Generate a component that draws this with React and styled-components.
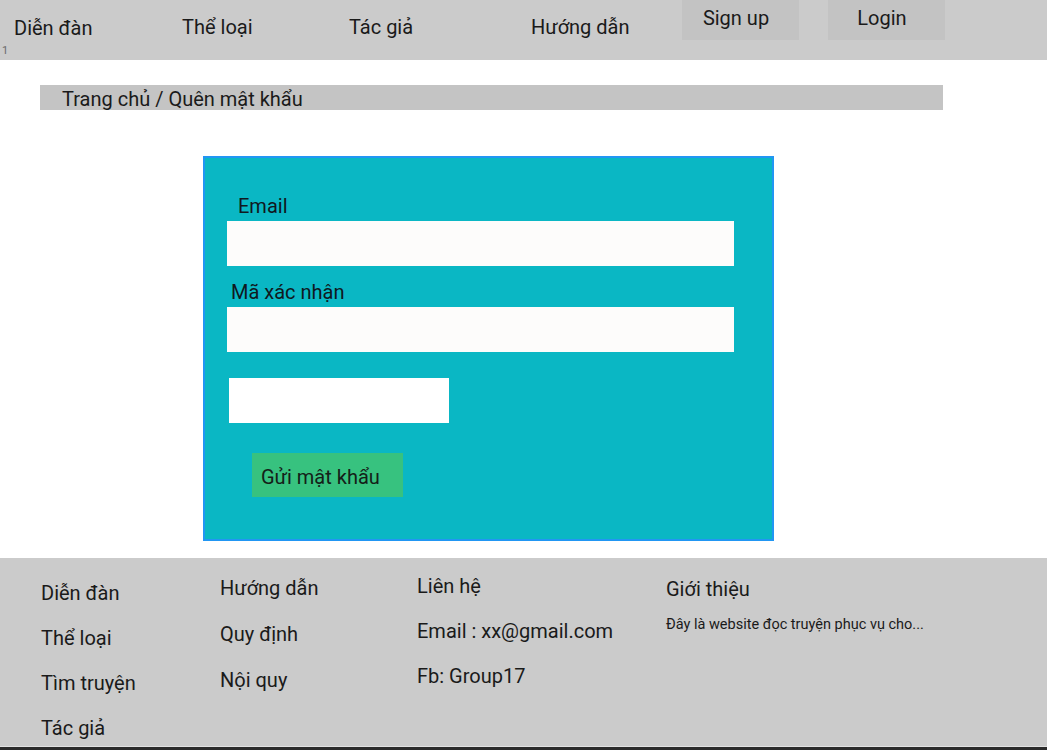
import styled, { createGlobalStyle } from "styled-components";

const GlobalStyle = createGlobalStyle`
  body {
    margin: 0;
    font-family: Roboto, "Noto Sans", sans-serif;
    color: #161616;
    background: #ffffff;
  }
`;

const navLinks = [
  { label: "Diễn đàn", width: 168, top: 17 },
  { label: "Thể loại", width: 167, top: 16 },
  { label: "Tác giả", width: 182, top: 16 },
  { label: "Hướng dẫn", width: 151, top: 16 },
];

const footerColumns = [
  { left: 41, width: 179, top: 582, gap: 23, items: ["Diễn đàn", "Thể loại", "Tìm truyện", "Tác giả"] },
  { left: 0, width: 197, top: 577, gap: 24, items: ["Hướng dẫn", "Quy định", "Nội quy"] },
  { left: 0, width: 249, top: 575, gap: 23, items: ["Liên hệ", "Email : xx@gmail.com", "Fb: Group17"] },
];

export default function App() {
  return (
    <>
      <GlobalStyle />
      <Page>
        <Header>
          <PageNumber>1</PageNumber>
          {navLinks.map((link) => (
            <NavLink key={link.label} $width={link.width} $top={link.top}>
              {link.label}
            </NavLink>
          ))}
          <HeaderButton>Sign up</HeaderButton>
          <HeaderButton $gap={29}>Login</HeaderButton>
        </Header>

        <Breadcrumb>Trang chủ / Quên mật khẩu</Breadcrumb>

        <FormCard>
          <Label $indent={11}>Email</Label>
          <Input type="text" />
          <Label $indent={4} $space={15}>
            Mã xác nhận
          </Label>
          <Input type="text" />
          <CaptchaInput type="text" />
          <SubmitButton type="button">Gửi mật khẩu</SubmitButton>
        </FormCard>

        <Footer>
          {footerColumns.map((col, i) => (
            <FooterColumn key={i} $left={col.left} $width={col.width} $top={col.top - 558} $gap={col.gap}>
              {col.items.map((item) => (
                <FooterLink key={item}>{item}</FooterLink>
              ))}
            </FooterColumn>
          ))}
          <FooterColumn $left={0} $width={330} $top={578 - 558} $gap={18}>
            <FooterLink>Giới thiệu</FooterLink>
            <AboutText>Đây là website đọc truyện phục vụ cho...</AboutText>
          </FooterColumn>
        </Footer>
        <Taskbar />
      </Page>
    </>
  );
}

const Page = styled.div`
  width: 1047px;
  height: 750px;
  overflow: hidden;
  display: flex;
  flex-direction: column;
`;

const Header = styled.header`
  position: relative;
  height: 60px;
  flex-shrink: 0;
  background: #cbcbcb;
  display: flex;
  align-items: flex-start;
  padding-left: 14px;
  box-sizing: border-box;
`;

const PageNumber = styled.span`
  position: absolute;
  left: 2px;
  top: 44px;
  font-size: 11px;
  color: #6a6a6a;
`;

const NavLink = styled.a`
  width: ${(p) => p.$width}px;
  margin-top: ${(p) => p.$top}px;
  font-size: 20px;
  line-height: 22px;
  color: #1a1a1a;
`;

const HeaderButton = styled.div`
  width: 117px;
  height: 40px;
  margin-left: ${(p) => p.$gap || 0}px;
  background: #c3c3c3;
  display: flex;
  justify-content: center;
  align-items: center;
  padding: 0 9px 4px 0;
  box-sizing: border-box;
  font-size: 20px;
  color: #1a1a1a;
`;

const Breadcrumb = styled.div`
  margin: 25px 0 0 40px;
  width: 903px;
  height: 25px;
  background: #c4c4c4;
  padding-left: 22px;
  box-sizing: border-box;
  font-size: 20px;
  line-height: 28px;
  color: #1a1a1a;
`;

const FormCard = styled.form`
  margin: 46px 0 0 203px;
  width: 571px;
  height: 385px;
  box-sizing: border-box;
  background: #0ab7c4;
  border: 2px solid #2196f3;
  padding: 37px 0 0 22px;
  display: flex;
  flex-direction: column;
  align-items: flex-start;
`;

const Label = styled.label`
  margin: ${(p) => p.$space || 0}px 0 4px ${(p) => p.$indent}px;
  font-size: 20px;
  line-height: 22px;
  color: #101820;
`;

const Input = styled.input`
  width: 507px;
  height: 45px;
  border: none;
  background: #fdfcfb;
  box-sizing: border-box;
  outline: none;
`;

const CaptchaInput = styled(Input)`
  width: 220px;
  margin: 26px 0 0 2px;
  background: #ffffff;
`;

const SubmitButton = styled.button`
  margin: 30px 0 0 25px;
  width: 151px;
  height: 44px;
  border: none;
  background: #37c27f;
  padding: 3px 0 0 9px;
  text-align: left;
  font-family: inherit;
  font-size: 20px;
  color: #142018;
`;

const Footer = styled.footer`
  margin-top: 17px;
  height: 188px;
  flex-shrink: 0;
  background: #cbcbcb;
  border-bottom: 1px solid #e2e2e2;
  display: flex;
  align-items: flex-start;
`;

const FooterColumn = styled.div`
  margin: ${(p) => p.$top}px 0 0 ${(p) => p.$left}px;
  width: ${(p) => p.$width}px;
  display: flex;
  flex-direction: column;
  gap: ${(p) => p.$gap}px;
`;

const FooterLink = styled.span`
  font-size: 20px;
  line-height: 22px;
  color: #1a1a1a;
`;

const AboutText = styled.span`
  font-size: 14.5px;
  line-height: 14px;
  color: #1a1a1a;
`;

const Taskbar = styled.div`
  flex: 1;
  background: #2b2b2b;
`;
